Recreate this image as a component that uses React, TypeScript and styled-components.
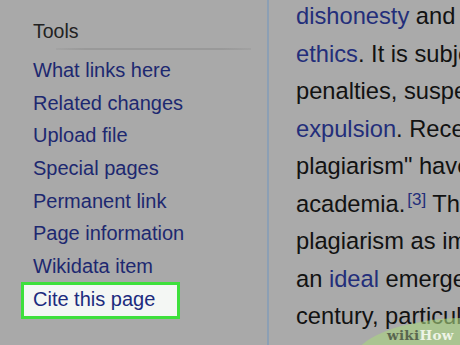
import React from "react";
import styled, { createGlobalStyle } from "styled-components";

const Global = createGlobalStyle`
  html, body { margin: 0; padding: 0; }
  body { background: #aaaaaa; font-family: "Liberation Sans", Arial, sans-serif; }
`;

const Page = styled.div`
  position: relative;
  width: 460px;
  height: 345px;
  overflow: hidden;
  display: flex;
  background: #aaaaaa;
`;

const Sidebar = styled.nav`
  width: 269px;
  flex: none;
  box-sizing: border-box;
  padding: 20px 0 0 33px;
  border-right: 2px solid #8c9fb4;
  background: #a9a9a9;
`;

const Heading = styled.div`
  font-size: 19.5px;
  line-height: 22px;
  color: #222222;
`;

const Rule = styled.div`
  height: 2px;
  margin: 6px 16px 0 23px;
  background: linear-gradient(to right, rgba(140,140,140,0.2), #999 15%, #999 85%, rgba(150,150,150,0.4));
`;

const LinkList = styled.ul`
  list-style: none;
  margin: 4px 0 0 0;
  padding: 0;
`;

const Item = styled.li<{ $hl?: boolean }>`
  font-size: 20px;
  color: #1d2870;
  white-space: nowrap;
  height: ${(p) => (p.$hl ? "37px" : "32.7px")};
  line-height: ${(p) => (p.$hl ? "29px" : "32.7px")};
  ${(p) =>
    p.$hl &&
    `
    box-sizing: border-box;
    width: 159px;
    margin: -1px 0 0 -12px;
    padding-left: 9px;
    border: 3px solid #3ee03c;
    background: #f4f7f4;
    color: #1c2b7e;
  `}
`;

const Article = styled.div`
  flex: 1;
  min-width: 0;
  padding: 0 0 0 27px;
  margin-top: -2px;
  overflow: hidden;
  font-size: 23.7px;
  color: #121212;
`;

const Line = styled.div`
  height: 37.5px;
  line-height: 37.5px;
  white-space: nowrap;
`;

const A = styled.span`
  color: #232e7a;
`;

const Sup = styled.span`
  font-size: 17px;
  line-height: 0;
  vertical-align: 7px;
  color: #232e7a;
  margin-left: 2px;
`;

const Watermark = styled.div`
  position: absolute;
  left: 352px;
  top: 318px;
  width: 230px;
  height: 90px;
  border-radius: 50%;
  background: rgba(170, 214, 128, 0.6);
`;

const Mark = styled.div`
  position: absolute;
  left: 387px;
  top: 327px;
  font-family: "DejaVu Serif", "Liberation Serif", serif;
  font-weight: bold;
  font-size: 13.5px;
  letter-spacing: 0.3px;
`;

const Wiki = styled.span`
  color: #59664f;
`;
const How = styled.span`
  color: #eef4e6;
`;

const links = [
  "What links here",
  "Related changes",
  "Upload file",
  "Special pages",
  "Permanent link",
  "Page information",
  "Wikidata item",
];

export default function App() {
  return (
    <>
      <Global />
      <Page>
        <Sidebar>
          <Heading>Tools</Heading>
          <Rule />
          <LinkList>
            {links.map((l) => (
              <Item key={l}>{l}</Item>
            ))}
            <Item $hl>Cite this page</Item>
          </LinkList>
        </Sidebar>
        <Article>
          <Line>
            <A>dishonesty</A> and a breach of journalistic
          </Line>
          <Line>
            <A>ethics</A>. It is subject to sanctions such as
          </Line>
          <Line>penalties, suspension, and even</Line>
          <Line>
            <A>expulsion</A>. Recently, cases of "extreme
          </Line>
          <Line>plagiarism" have been identified in</Line>
          <Line>
            academia.<Sup>[3]</Sup> The modern concept of
          </Line>
          <Line>plagiarism as immoral and originality as</Line>
          <Line>
            an <A>ideal</A> emerged in Europe in the 18th
          </Line>
          <Line>century, particularly with the Romantic</Line>
        </Article>
        <Watermark />
        <Mark>
          <Wiki>wiki</Wiki>
          <How>How</How>
        </Mark>
      </Page>
    </>
  );
}
